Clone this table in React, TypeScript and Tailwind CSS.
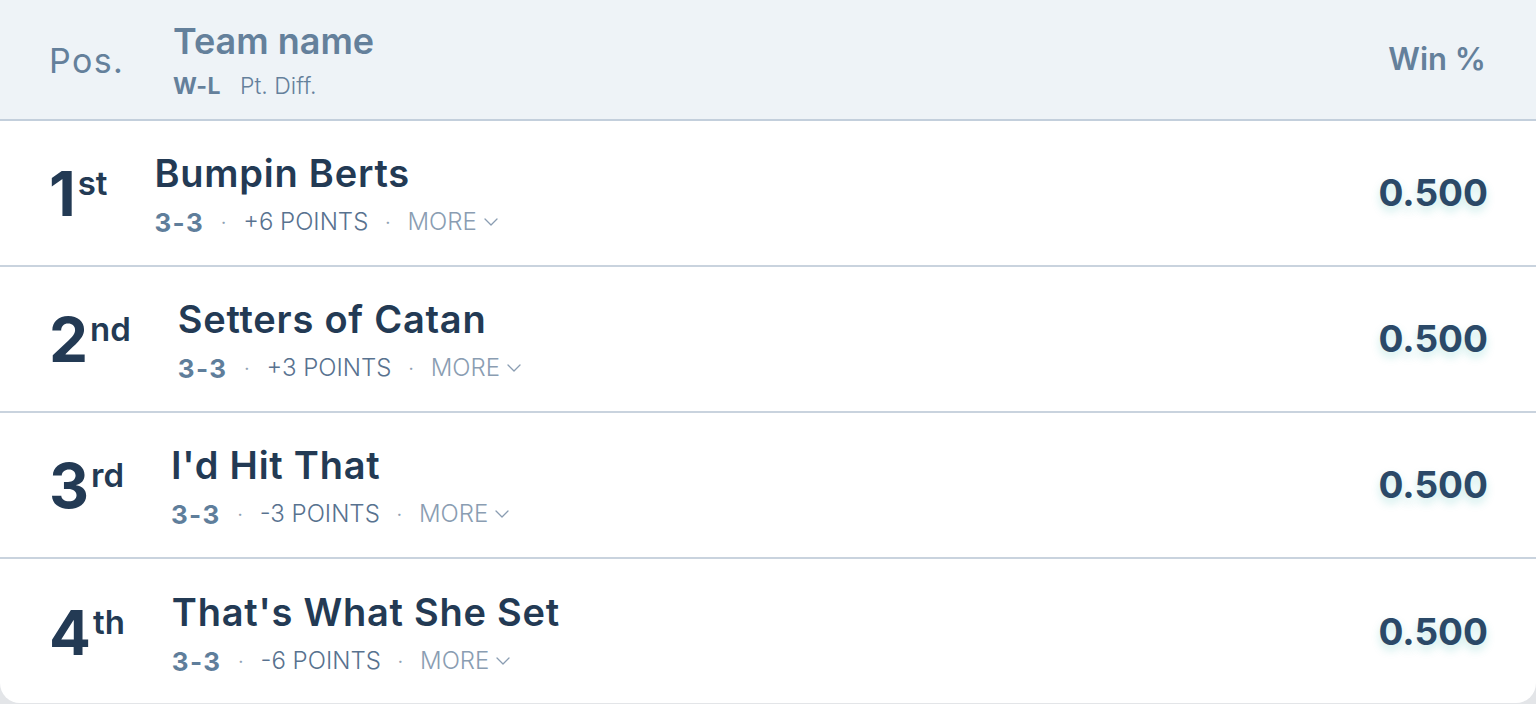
import { ChevronDown } from "lucide-react";

const teams = [
  { pos: "1", suf: "st", name: "Bumpin Berts", wl: "3-3", diff: "+6 POINTS", pct: "0.500" },
  { pos: "2", suf: "nd", name: "Setters of Catan", wl: "3-3", diff: "+3 POINTS", pct: "0.500" },
  { pos: "3", suf: "rd", name: "I'd Hit That", wl: "3-3", diff: "-3 POINTS", pct: "0.500" },
  { pos: "4", suf: "th", name: "That's What She Set", wl: "3-3", diff: "-6 POINTS", pct: "0.500" },
];

export default function App() {
  return (
    <div className="h-[704px] bg-[#e3e5e8] font-['Inter',sans-serif]">
      <div className="h-[703px] bg-white rounded-b-[20px] overflow-hidden flex flex-col">
        {/* header */}
        <div className="h-[121px] shrink-0 bg-[#eef3f7] border-b-2 border-[#c3cfdc] flex items-center pl-[49px] pr-[50px] text-[#64809b]">
          <div className="w-[124px] text-[34px] tracking-[0.04em] pt-[2px]">Pos.</div>
          <div className="flex-1 flex flex-col">
            <span className="text-[36px] font-semibold leading-[42px] mt-[5px]">Team name</span>
            <div className="flex items-baseline gap-[19px] text-[23px] mt-[7px]">
              <span className="font-bold tracking-[0.02em]">W-L</span>
              <span className="font-light">Pt. Diff.</span>
            </div>
          </div>
          <div className="text-[31px] font-semibold">Win %</div>
        </div>

        {/* rows */}
        {teams.map((t, i) => (
          <div
            key={t.name}
            className={`h-[146px] shrink-0 flex items-center pl-[49px] pr-[48px] ${
              i < teams.length - 1 ? "border-b-2 border-[#c9d3de]" : ""
            }`}
          >
            <div className="flex items-start text-[#233a54] font-bold mt-[2px]">
              <span className="text-[62px] leading-[62px]">{t.pos}</span>
              <span className="text-[33px] leading-[33px] font-semibold ml-[2px] mt-[4px]">{t.suf}</span>
            </div>
            <div className="ml-[47px] mt-[6px] flex-1 flex flex-col">
              <span className="text-[38px] font-semibold tracking-[0.02em] text-[#233a54] leading-[44px]">{t.name}</span>
              <div className="flex items-center text-[24px] mt-[8px]">
                <span className="font-bold text-[26px] tracking-[0.05em] text-[#5f7e9b]">{t.wl}</span>
                <span className="mx-[17px] text-[#8fa1b3] text-[18px]">·</span>
                <span className="font-light text-[#58728f]">{t.diff}</span>
                <span className="mx-[17px] text-[#8fa1b3] text-[18px]">·</span>
                <span className="font-light text-[#8a9db2]">MORE</span>
                <ChevronDown className="w-[24px] h-[24px] text-[#8a9db2] ml-[2px]" strokeWidth={1.3} />
              </div>
            </div>
            <div className="text-[37px] font-bold text-[#2b4968] [text-shadow:0_5px_8px_rgba(45,180,170,0.25)]">
              {t.pct}
            </div>
          </div>
        ))}
      </div>
    </div>
  );
}
